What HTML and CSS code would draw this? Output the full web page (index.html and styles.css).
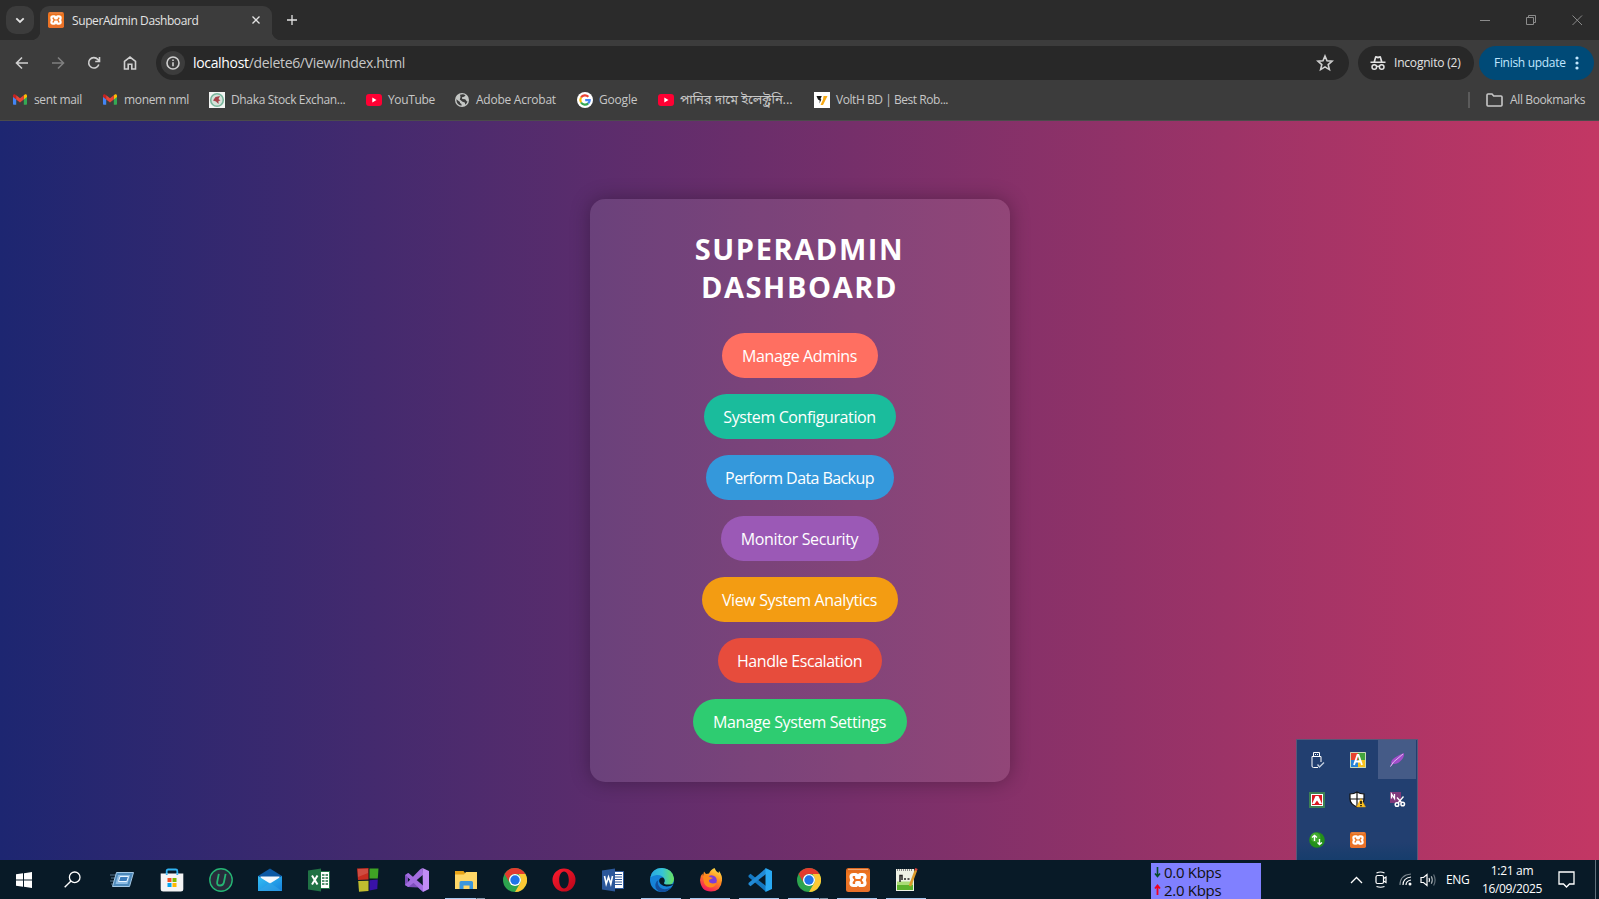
FILE: index.html
```html
<!DOCTYPE html>
<html lang="en">
<head>
<meta charset="utf-8">
<title>SuperAdmin Dashboard</title>
<link rel="stylesheet" href="styles.css">
</head>
<body>
<svg class="defs" width="0" height="0">
  <defs>
    <linearGradient id="gOrange" x1="0" y1="0" x2="0" y2="1"><stop offset="0" stop-color="#d9621a"/><stop offset=".25" stop-color="#f0771f"/><stop offset="1" stop-color="#e8702a"/></linearGradient>
    <linearGradient id="gEdge" x1="0" y1="0" x2="1" y2="0"><stop offset="0" stop-color="#2aa9e0"/><stop offset=".5" stop-color="#35c3d8"/><stop offset="1" stop-color="#6be35a"/></linearGradient>
    <linearGradient id="gFox" x1=".8" y1="0" x2=".3" y2="1"><stop offset="0" stop-color="#ffe34a"/><stop offset=".45" stop-color="#ff8a1f"/><stop offset="1" stop-color="#f5145f"/></linearGradient>
    <linearGradient id="gMail" x1="0" y1="0" x2="1" y2="1"><stop offset="0" stop-color="#35c0f5"/><stop offset="1" stop-color="#1682dc"/></linearGradient>
    <linearGradient id="gOpera" x1="0" y1="0" x2="1" y2="1"><stop offset="0" stop-color="#ff1b2d"/><stop offset="1" stop-color="#b8061a"/></linearGradient>
    <symbol id="gmail" viewBox="0 0 14 11"><path fill="#4285f4" d="M0 1.500V10q0 .7.7.7h2.500V4z"/><path fill="#34a853" d="M14 1.500V10q0 .7-.7.7h-2.500V4z"/><path fill="#fbbc04" d="M10.800 1.300 12.200.3Q14-.3 14 1.800V3l-3.200 2.600z"/><path fill="#c5221f" d="M3.200 1.300 1.800.3Q0-.3 0 1.800V3l3.200 2.600z"/><path fill="#ea4335" d="M3.200 1.300 7 4.300l3.800-3v4.300L7 8.500 3.200 5.600z"/></symbol>
    <symbol id="youtube" viewBox="0 0 16 12"><rect width="16" height="12" rx="3" fill="#ff0033"/><path fill="#fff" d="M6.300 3.500v5L10.500 6z"/></symbol>
    <symbol id="xampp" viewBox="0 0 24 24"><rect width="24" height="24" rx="2.500" fill="url(#gOrange)"/><path d="M2 1.500h20" stroke="#f4a46c" stroke-width="1.200"/><path fill="none" stroke="#fff" stroke-width="3.200" stroke-linejoin="round" d="M7.500 6.500h2q1.200 0 1.200 1.200v1.800h2.600V7.700q0-1.200 1.200-1.200h2q2.500 0 2.500 2.500 0 2-1.500 3 1.500 1 1.500 3 0 2.500-2.500 2.500h-2q-1.200 0-1.200-1.200v-1.800h-2.600v1.800q0 1.200-1.200 1.200h-2Q5 17.500 5 15q0-2 1.500-3Q5 11 5 9q0-2.500 2.500-2.500z"/></symbol>
    <symbol id="chrome" viewBox="0 0 24 24"><circle cx="12" cy="12" r="12" fill="#2da44e"/><path fill="#e33b2e" d="M1.600 6A12 12 0 0 1 22.400 6H12a6 6 0 0 0-5.200 9z"/><path fill="#fcc934" d="M22.400 6A12 12 0 0 1 12 24l5.200-9A6 6 0 0 0 17.200 9L15.500 6z"/><circle cx="12" cy="12" r="6" fill="#fff"/><circle cx="12" cy="12" r="4.700" fill="#1f74e8"/></symbol>
  </defs>
</svg>

<header class="chrome">
  <div class="tabstrip">
    <button class="tab-search"><svg width="28" height="28" viewBox="0 0 28 28"><path d="m10.300 12.300 3.700 3.700 3.700-3.700" class="ln2"/></svg></button>
    <div class="tab">
      <svg width="16" height="16"><use href="#xampp"/></svg>
      <span class="tab-title">SuperAdmin Dashboard</span>
      <svg class="tab-close" width="8" height="8" viewBox="0 0 8 8"><path d="m.5.5 7 7m0-7-7 7" class="ln1"/></svg>
    </div>
    <svg class="new-tab" width="12" height="12" viewBox="0 0 12 12"><path d="M6 1v10M1 6h10" class="ln1"/></svg>
    <svg class="win" width="104" height="14" viewBox="0 0 104 14"><path d="M0 7.500h10M46.500 4.500h7v7h-7zM48.500 4.500v-2h7v7h-2M92.500 2.500l9.500 9.500m0-9.500L92.500 12" fill="none" stroke="#8b8b8b"/></svg>
  </div>

  <div class="toolbar">
    <svg class="nav" viewBox="0 0 16 16"><path d="M14 8H2.800M8 2.500 2.500 8 8 13.500" class="ln15"/></svg>
    <svg class="nav off" viewBox="0 0 16 16"><path d="M2 8h11.200M8 2.500 13.500 8 8 13.500" class="ln15"/></svg>
    <svg class="nav" viewBox="0 0 16 16"><path d="M12.800 9.500A5.200 5.200 0 1 1 11.800 4.400L13.300 6M13.500 2v4.500H9.200" class="ln15"/></svg>
    <svg class="nav" viewBox="0 0 16 16"><path d="M2.500 14V6.300L8 2l5.500 4.300V14h-3.700V9.300H6.200V14z" class="ln15"/></svg>
    <div class="omnibox">
      <span class="info"><svg width="14" height="14" viewBox="0 0 14 14"><circle cx="7" cy="7" r="6" class="ln15"/><path d="M7 6.200v4M7 3.500v1.500" class="ln15"/></svg></span>
      <span class="url"><b>localhost</b>/delete6/View/index.html</span>
      <svg class="star" width="18" height="18" viewBox="0 0 18 18"><path d="m9 2 2 4.800 5.100.4-3.900 3.400 1.200 5L9 12.900l-4.400 2.700 1.200-5-3.900-3.400 5.100-.4z" class="ln15"/></svg>
    </div>
    <div class="incognito">
      <svg width="16" height="16" viewBox="0 0 16 16" fill="#e3e3e3"><path d="M3.500 6.500 5 1.500q.3-.7 1-.5l2 .5 2-.5q.7-.2 1 .5l1.500 5h3V8H.5V6.500zM5.300 6.500h5.400L9.800 3 8 3.400 6.200 3z"/><g fill="none" stroke="#e3e3e3" stroke-width="1.500"><circle cx="4.300" cy="12" r="2.300"/><circle cx="11.700" cy="12" r="2.300"/><path d="M6.500 11.700q1.500-.8 3 0"/></g></svg>
      <span>Incognito (2)</span>
    </div>
    <div class="update"><span>Finish update</span><svg width="4" height="14" viewBox="0 0 4 14" fill="#c2e7ff"><circle cx="2" cy="2" r="1.600"/><circle cx="2" cy="7" r="1.600"/><circle cx="2" cy="12" r="1.600"/></svg></div>
  </div>

  <nav class="bookmarks">
    <a class="bm b1"><svg width="14" height="11"><use href="#gmail"/></svg><span>sent mail</span></a>
    <a class="bm b2"><svg width="14" height="11"><use href="#gmail"/></svg><span>monem nml</span></a>
    <a class="bm b3"><svg width="16" height="16" viewBox="0 0 16 16"><path fill="#f3f5f3" d="M0 0h16v16H0z"/><circle cx="8" cy="8" r="6.300" fill="#d5e2da" stroke="#78b69c" stroke-width="1.600"/><path fill="#a6434a" d="M4 8.500 6.500 5 11 4 9.500 7l2 1.500-2 .5v3L7 9.500z"/></svg><span>Dhaka Stock Exchan...</span></a>
    <a class="bm b4"><svg width="16" height="12"><use href="#youtube"/></svg><span>YouTube</span></a>
    <a class="bm b5"><svg width="14" height="14" viewBox="0 0 14 14"><circle cx="7" cy="7" r="7" fill="#c4c7c5"/><path fill="#3c3c3c" d="M1.300 6.300 5 9v1l1.500 1v1.800Q1.500 12 1.300 6.300zM5 1.800q3.500-1.300 5.500.6L9 3.800 7 4.300 7.200 6l3 .2 1.500 2 .8.300q-.6 2-2.200 3.200L9.800 9.500 7.500 8.800 4.800 6.500 5.500 4z"/></svg><span>Adobe Acrobat</span></a>
    <a class="bm b6"><svg width="16" height="16" viewBox="0 0 16 16"><circle cx="8" cy="8" r="8" fill="#fff"/><g fill="none" stroke-width="2.200"><path stroke="#ea4335" d="M4 5.500A4.800 4.800 0 0 1 11.400 4.700"/><path stroke="#fbbc04" d="M4 5.500a5 5 0 0 0 0 5"/><path stroke="#34a853" d="M4 10.500a4.800 4.800 0 0 0 7.200.9"/><path stroke="#4285f4" d="M11.200 11.400Q12.700 10 12.700 8.200H8.200"/></g></svg><span>Google</span></a>
    <a class="bm b7"><svg width="16" height="12"><use href="#youtube"/></svg><span class="bn">পানির দামে ইলেক্ট্রনি...</span></a>
    <a class="bm b8"><svg width="16" height="16" viewBox="0 0 16 16"><path fill="#fff" d="M0 0h16v16H0z"/><path fill="#161616" d="M2.500 4h5.300L6.500 7l.8.500L5.500 11.500l.2-3L4 7.500z"/><path fill="#f6a813" d="M9.500 4h4L9 13H6.500L9 7.500z"/></svg><span>VoltH BD | Best Rob...</span></a>
    <span class="bm-sep"></span>
    <a class="bm all"><svg width="17" height="14" viewBox="0 0 17 14"><path d="M1 2q0-1 1-1h4l1.700 2H15q1 0 1 1v8q0 1-1 1H2q-1 0-1-1z" class="ln15"/></svg><span>All Bookmarks</span></a>
  </nav>
</header>

<main class="page">
  <section class="card">
    <h1><span class="t1">SuperAdmin</span><br><span class="t2">Dashboard</span></h1>
    <button class="btn coral">Manage Admins</button>
    <button class="btn teal">System Configuration</button>
    <button class="btn blue">Perform Data Backup</button>
    <button class="btn purple">Monitor Security</button>
    <button class="btn amber">View System Analytics</button>
    <button class="btn red">Handle Escalation</button>
    <button class="btn green">Manage System Settings</button>
  </section>
</main>

<aside class="tray-menu">
  <span><svg width="16" height="18" viewBox="0 0 16 18" fill="none" stroke="#fff"><path d="M4.500 5.500v-4h6v4M9 16.500H4.500q-1.500 0-1.500-1.500V5.500h9V11M6.500 3v1M8.500 3v1"/><path stroke="#c2cede" stroke-width="1.400" d="m8.500 13.500 2 2.500 4.500-4.500"/></svg></span>
  <span><svg width="16" height="16" viewBox="0 0 16 16"><path fill="#e8432d" d="M0 0h8v8H0z"/><path fill="#43a43c" d="M8 0h8v8H8z"/><path fill="#2583d8" d="M0 8h8v8H0z"/><path fill="#f8c21c" d="M8 8h8v8H8z"/><path fill="none" stroke="#c9d8ba" d="M.5.5h15v15H.5z"/><path fill="none" stroke="#fff" stroke-width="1.800" d="m4 13 3.500-10h1L12 13M5.300 9.500h5.500"/></svg></span>
  <span class="hot"><svg width="16" height="16" viewBox="0 0 16 16"><path fill="#a14dca" d="M1 15 2.500 12Q1 9 6 5.500 10 2.500 15 1q.5 5-4 8.500Q8 12.500 4 12z"/><path stroke="#e0b9f2" fill="none" d="M1.500 14.500 4.500 10 14 2"/></svg></span>
  <span><svg width="16" height="16" viewBox="0 0 16 16"><path fill="#3c8054" d="M0 0h16v16H0z"/><path fill="#fff" d="M2 2h12v12H2z"/><path fill="#dc1822" d="M3 3h10v10H3z"/><path fill="#fff" d="M6.500 4h3L13 12h-2.500L8 8.500 5.500 12H3z"/></svg></span>
  <span><svg width="17" height="17" viewBox="0 0 17 17"><path fill="#fff" stroke="#111" stroke-width="1.200" d="M1 3Q5 3 8 1q3 2 7 2v5q0 5-7 8Q1 13 1 8z"/><path stroke="#111" stroke-width="1.200" d="M8 1v15M1 8h14"/><path fill="#fdc321" stroke="#d99b10" stroke-width=".5" d="M12 7.500 16.500 16h-9z"/><path stroke="#111" stroke-width="1.600" d="M12 10v3M12 14v1.300"/></svg></span>
  <span><svg width="17" height="16" viewBox="0 0 17 16"><path fill="#80397b" d="M1 0h11v11H1z"/><path fill="none" stroke="#fff" stroke-width="1.300" d="M2.500 6.500V2l3 4.500V2M8 5.500l5 5.500M14.500 4.500 9 11"/><g fill="none" stroke="#fff" stroke-width="1.500"><circle cx="8" cy="12.500" r="1.800"/><circle cx="13.700" cy="12" r="1.800"/></g></svg></span>
  <span><svg width="16" height="16" viewBox="0 0 16 16"><circle cx="8" cy="8" r="7.800" fill="#23901a"/><circle cx="6.500" cy="5.500" r="5" fill="#56bd3d" opacity=".6"/><path stroke="#fff" stroke-width="1.400" fill="none" d="M5.500 9V4M3 5.500 5.500 3.500 8 5.500M10.500 7v5M8.500 10.500l2 2 2.500-2"/></svg></span>
  <span><svg width="16" height="16"><use href="#xampp"/></svg></span>
  <span></span>
</aside>

<footer class="taskbar">
  <span class="app start"><svg width="16" height="16" viewBox="0 0 16 16" fill="#fff"><path d="M0 2.300 7 1.300v6.200H0zM8 1.200 16 0v7.500H8zM0 8.500h7v6.200l-7-1zM8 8.500h8V16l-8-1.200z"/></svg></span>
  <span class="app find"><svg width="17" height="17" viewBox="0 0 17 17"><circle cx="10.700" cy="6.300" r="5.300" fill="none" stroke="#fff" stroke-width="1.300"/><path d="M7 10 .7 16.300" stroke="#fff" stroke-width="1.400"/></svg></span>
  <span class="app"><svg width="24" height="24" viewBox="0 0 24 24"><path d="M0 7h6M1 10h5M0 13h5M1 16h4" stroke="#58758d"/><path fill="#4e8abb" stroke="#a5c9e6" d="M6.500 4.500h17l-4 14h-17z"/><path fill="#8dbce4" d="M8 7h12l-2.500 9h-12z"/><path fill="#3b7cbb" stroke="#e8f4ff" d="M10 8.500h8.500l-1.700 5H8.500z"/></svg></span>
  <span class="app"><svg width="24" height="24" viewBox="0 0 24 24"><path fill="none" stroke="#30b3f2" stroke-width="1.800" d="M6.700 7V3q0-1.500 1.500-1.500h7.600q1.500 0 1.500 1.500v4"/><path fill="#f4f4f5" d="M.7 5.500h22.600V21q0 2.500-2.500 2.500H3.200Q.7 23.500.7 21z"/><path fill="#30b3f2" d="M5.800 5.500h1.800V7H5.800zM16.400 5.500h1.800V7h-1.800z"/><path fill="#f25022" d="M7.500 10h4v4h-4z"/><path fill="#7fba00" d="M12.500 10h4v4h-4z"/><path fill="#00a4ef" d="M7.500 15h4v4h-4z"/><path fill="#ffb900" d="M12.500 15h4v4h-4z"/></svg></span>
  <span class="app"><svg width="24" height="24" viewBox="0 0 24 24"><circle cx="12" cy="12" r="11.200" fill="#272c3b" stroke="#25b574" stroke-width="1.400"/><path fill="none" stroke="#25b574" stroke-width="1.800" d="M9.800 5.800 8.200 14q-.5 3.500 2.800 3.500T15 14l1.600-8.200"/></svg></span>
  <span class="app"><svg width="24" height="24" viewBox="0 0 24 24"><path fill="#0c59a4" d="M0 8 12 .5 24 8v5H0z"/><path fill="#f4f8fc" d="M2.500 8.500h19v5L12 18l-9.500-4.500z"/><path fill="url(#gMail)" d="m0 8 12 7.500L24 8v15H0z"/><path fill="#37a8e8" d="m0 23 12-8.500L24 23z" opacity=".5"/></svg></span>
  <span class="app"><svg width="24" height="24" viewBox="0 0 24 24"><path fill="#fff" stroke="#207245" d="M13 3.500h9.500v17H13z"/><path stroke="#207245" stroke-width="1.600" d="M15 7h6M15 10h6M15 13h6M15 16h6"/><path stroke="#fff" d="M18 4v16"/><path fill="#207245" d="M1 2.500 14 .5v23L1 21.500z"/><path stroke="#fff" stroke-width="2" d="m5 7.500 5.500 9m0-9-5.500 9"/></svg></span>
  <span class="app"><svg width="24" height="24" viewBox="0 0 24 24"><path fill="#c62d20" d="M1 .500 12.500 0v11.500L2 12z"/><path fill="#3fa324" d="M13.500.5h9l-.7 10h-8.300z"/><path fill="#c1bd2f" d="M2.200 13 12.500 12.700V23l-9.500.7z"/><path fill="#3912a7" d="M13.500 12.200l8.300-.8-.5 9.500-7.800 1.700z"/><path fill="#fff" opacity=".15" d="M2 1h10v4L2 9z"/></svg></span>
  <span class="app"><svg width="24" height="24" viewBox="0 0 24 24"><path fill="#7e4fbd" d="m0 7 3-2L18 24l-5-4.500L3 19 0 17z"/><path fill="#0a1c2a" d="m3 9.500 2.600 2.500L3 14.500z"/><path fill="#a26de0" d="M17.500 0 18 6.700 3.500 19 0 17 15 1.500zM3.500 5 18 17.500V24L.5 7z"/><path fill="#c18cf5" d="M17.500 0 24 3v18l-6 3z"/></svg></span>
  <span class="app open two"><svg width="24" height="24" viewBox="0 0 24 24"><path fill="#e8a317" d="M1 3h8.500l1.500 2v4H1z"/><path fill="#ffd767" d="M1 6.500h9l2-2.500h11v17H1z"/><path fill="#3b96dc" d="M5.500 21v-6.500Q5.500 13 7 13h10.500q1.500 0 1.500 1.500V21h-3.500v-3.500h-6V21z"/></svg></span>
  <span class="app"><svg width="24" height="24"><use href="#chrome"/></svg></span>
  <span class="app"><svg width="24" height="24" viewBox="0 0 24 24"><path fill="url(#gOpera)" fill-rule="evenodd" d="M12 .5a11.500 11.500 0 1 1 0 23 11.500 11.500 0 0 1 0-23zM12 3.500c-3 0-4.800 4-4.800 8.500s1.800 8.500 4.800 8.500 4.800-4 4.800-8.500-1.800-8.500-4.800-8.500z"/></svg></span>
  <span class="app"><svg width="24" height="24" viewBox="0 0 24 24"><path fill="#fff" stroke="#2b579a" d="M13 3.500h9.500v17H13z"/><path stroke="#2b579a" stroke-width="1.200" d="M14 6.500h7M14 9h7M14 11.500h7M14 14h7M14 16.500h7"/><path fill="#2b579a" d="M1 2.500 14 .5v23L1 21.500z"/><path fill="none" stroke="#fff" stroke-width="1.600" d="m3.500 8 1.700 8L7.500 9l2.300 7 1.700-8"/></svg></span>
  <span class="app open"><svg width="24" height="24" viewBox="0 0 24 24"><circle cx="12" cy="12" r="12" fill="#1683d8"/><path fill="url(#gEdge)" d="M.3 9.500Q2 0 12 0q11 1 12 10.500 0 6-6 6.500-4 0-4-2 1.500-2 .5-4Q12 6.500 6.500 7 2.500 7.500.3 9.500z"/><path fill="#124f9e" d="M8.500 12q-2 4 1.500 7.500 4 3.500 11 0Q17 24.500 11 24 4.500 22 5.500 16q.5-3 3-4z"/><path fill="#081a27" d="M14 15q1.300-2 .3-4-1.500-2.500-4.300-.5-2 2.500.5 5.500 4 4 11 1.500l2-1.500Q14 17.500 14 15z"/></svg></span>
  <span class="app open"><svg width="24" height="24" viewBox="0 0 24 24"><path fill="url(#gFox)" d="M5 3.500 7 6l3-.5q1.500-4 5.500-5.500 1 3 4 5l.5-2q3.500 4.500 3 9.500Q22 23.500 12 23.500T1 12q0-4 2.500-6.500L4 8z"/><circle cx="12.500" cy="12.500" r="5.300" fill="#7a3ed9"/><path fill="#ff8a1b" d="M4 8q4-2 7 1l3 1-4 2q-.5 3 3.500 3.500 3 0 4-1-1 5-6.500 5Q5 19 4.500 12z"/></svg></span>
  <span class="app open"><svg width="24" height="24" viewBox="0 0 24 24"><path fill="#1478c2" d="m.5 7.500 2-1.700L18 18v5.800L.5 9z"/><path fill="#218ad5" d="m.5 16.500 2 1.700L18 6V.2L.5 15z"/><path fill="#29a9f2" d="M17.500 0 24 3v18l-6.500 3z"/></svg></span>
  <span class="app open two"><svg width="24" height="24"><use href="#chrome"/></svg></span>
  <span class="app open"><svg width="24" height="24"><use href="#xampp"/></svg></span>
  <span class="app open npp"><svg width="24" height="24" viewBox="0 0 24 24"><path fill="#eef2e6" d="M2 1h18v22H2z"/><path fill="#5bb22c" d="M3 17h16v5H3z"/><path fill="#a9dc76" d="M3 13.500h16V17H3z"/><path stroke="#8a8a8a" stroke-dasharray="1 1" stroke-width="2" d="M3 2h16"/><path fill="none" stroke="#222" stroke-width="1.500" d="M6 14V7.500h2V12M10 11h2M13.500 11h2"/><path stroke="#dc9b2b" stroke-width="2.500" d="m22 2-6 16"/><path stroke="#d8453e" stroke-width="2.500" d="m22.500.5-.8 2"/></svg></span>

  <div class="netspeed">
    <div><svg width="7" height="12" viewBox="0 0 7 12"><path d="M3.500 1v9M1 7.500 3.500 10.500 6 7.500" stroke="#054a28" stroke-width="1.600" fill="none"/></svg><span>0.0 Kbps</span></div>
    <div><svg width="7" height="12" viewBox="0 0 7 12"><path d="M3.500 11V2M1 4.500 3.500 1.500 6 4.500" stroke="#f00020" stroke-width="1.800" fill="none"/></svg><span>2.0 Kbps</span></div>
  </div>
  <div class="tray">
    <svg class="up" width="13" height="8" viewBox="0 0 13 8"><path d="m1 7 5.500-5.500L12 7" fill="none" stroke="#fff" stroke-width="1.300"/></svg>
    <svg class="cam" width="12" height="17" viewBox="0 0 12 17" fill="none" stroke="#fff" stroke-width="1.200"><rect x="1" y="4.500" width="7.500" height="8" rx="1.500"/><path d="M8.500 7.500 11 6v5.500L8.500 10M1.500 2q4-2 8 0M1.500 15.500q4 1.500 8 0"/></svg>
    <svg class="wifi" width="13" height="13" viewBox="0 0 13 13" fill="none" stroke-width="1.200"><path stroke="#7b868e" d="M1 12Q1 2 12 1"/><path stroke="#fff" d="M4 12q0-7 8-8M7 12q0-4 5-5"/><circle cx="11" cy="11" r="1.500" fill="#fff"/></svg>
    <svg class="vol" width="17" height="14" viewBox="0 0 17 14" fill="none" stroke="#fff" stroke-width="1.200"><path d="M1 4.500h2.500L7 1.500v11L3.500 9.500H1zM9 5q1 2 0 4"/><path stroke="#a5adb2" d="M11.300 3.300q2 3.700 0 7.400"/><path stroke="#64717b" d="M13.600 1.500q3 5.500 0 11"/></svg>
    <span class="lang">ENG</span>
    <div class="clock"><span>1:21 am</span><span class="date">16/09/2025</span></div>
    <svg class="note" width="17" height="17" viewBox="0 0 17 17"><path d="M1 1h15v12h-4.500L8.500 16l-3-3H1z" fill="none" stroke="#fff" stroke-width="1.300"/></svg>
    <span class="peek"></span>
  </div>
</footer>
</body>
</html>
```
FILE: styles.css
```css
* { box-sizing: border-box; }
body {
  margin: 0; width: 1599px; height: 899px; overflow: hidden;
  display: flex; flex-direction: column;
  font-family: "Open Sans", "Noto Sans", "Noto Sans Bengali", sans-serif;
  font-size: 12px; letter-spacing: -.3px; color: #e3e3e3;
}
svg { display: block; flex: none; }
span { white-space: nowrap; }
button { border: 0; padding: 0; font: inherit; color: inherit; }
.defs { position: absolute; }
.ln1, .ln15, .ln2 { fill: none; stroke: currentColor; stroke-width: 1.3; }
.ln15 { stroke-width: 1.6; }
.ln2 { stroke-width: 1.8; }

/* Browser frame */
.chrome { height: 121px; flex: none; background: #3c3c3c; border-bottom: 1px solid #4b4b4b; }
.tabstrip { height: 40px; display: flex; background: #2b2b2b; padding: 6px 15px 0 6px; }
.tab-search { width: 28px; height: 28px; border-radius: 10px; background: #3c3c3c; }
.tab { position: relative; width: 232px; height: 34px; margin-left: 6px; padding: 0 12px 6px 8px; display: flex; align-items: center; gap: 8px; background: #3c3c3c; border-radius: 9px 9px 0 0; }
.tab::before, .tab::after { content: ""; position: absolute; bottom: 0; width: 9px; height: 9px; }
.tab::before { left: -9px; background: radial-gradient(circle at 0 0, transparent 9px, #3c3c3c 9.5px); }
.tab::after { right: -9px; background: radial-gradient(circle at 100% 0, transparent 9px, #3c3c3c 9.5px); }
.tab-title { flex: 1; letter-spacing: -.4px; }
.new-tab { margin: 8px 0 0 14px; }
.win { margin: 7px 0 0 auto; }

.toolbar { height: 40px; display: flex; align-items: center; padding: 6px 5px 0 14px; color: #d0d0d0; }
.nav { width: 16px; height: 16px; margin-right: 20px; }
.nav.off { opacity: .45; }
.omnibox { width: 1193px; height: 34px; margin-left: -2px; padding: 0 15px 0 5px; display: flex; align-items: center; border-radius: 17px; background: #282828; }
.info { width: 24px; height: 24px; border-radius: 50%; background: #3c3c3c; display: grid; place-items: center; }
.url { flex: 1; margin-left: 8px; padding-bottom: 1px; font-size: 14px; color: #c7c7c7; letter-spacing: -.33px; }
.url b { font-weight: 400; color: #fff; }
.incognito, .update { height: 34px; padding-bottom: 1px; border-radius: 17px; display: flex; align-items: center; }
.incognito { width: 116px; margin-left: 9px; padding-left: 12px; gap: 8px; background: #282828; color: #e3e3e3; letter-spacing: -.2px; }
.update { width: 115px; margin-left: 5px; padding: 0 15px 1px; justify-content: space-between; background: #004a77; color: #c2e7ff; }

.bookmarks { height: 40px; display: flex; align-items: center; padding: 0 0 1px 13px; color: #c7c7c7; letter-spacing: -.35px; }
.bm { display: flex; align-items: center; gap: 7px; }
.b1 { width: 90px; }
.b2 { width: 106px; }
.b3 { width: 157px; gap: 6px; }
.b4 { width: 89px; gap: 6px; }
.b5 { width: 122px; letter-spacing: -.25px; }
.b6 { width: 81px; gap: 6px; letter-spacing: -.2px; }
.b7 { width: 156px; gap: 6px; }
.b8 { gap: 6px; letter-spacing: -.45px; }
.bn { font-size: 13px; letter-spacing: -.1px; }
.bm-sep { width: 2px; height: 16px; margin-left: auto; background: #5b5b5b; }
.all { width: 113px; margin-left: 16px; letter-spacing: -.37px; }

/* Dashboard */
.page { height: 739px; flex: none; padding-top: 78px; display: flex; justify-content: center; align-items: flex-start; background: linear-gradient(to right, #1d2671, #c33764); letter-spacing: 0; }
.card { width: 420px; height: 583px; padding: 31px 0 0; display: flex; flex-direction: column; align-items: center; gap: 16px; border-radius: 15px; background: rgba(255, 255, 255, .1); box-shadow: 0 0 20px rgba(0, 0, 0, .3); color: #fff; }
h1 { margin: 0 0 11px; height: 76px; text-align: center; text-transform: uppercase; font-size: 29px; line-height: 38px; font-weight: 700; letter-spacing: 1.6px; }
.btn { height: 45px; flex: none; border-radius: 23px; color: #fff; font-size: 16px; letter-spacing: -.38px; }
.coral { width: 156px; background: #ff6f61; }
.teal { width: 192px; background: #1abc9c; }
.blue { width: 188px; background: #3498db; letter-spacing: -.58px; }
.purple { width: 158px; background: #9b59b6; }
.amber { width: 196px; background: #f39c12; }
.red { width: 164px; background: #e74c3c; letter-spacing: -.45px; }
.green { width: 214px; background: #2ecc71; }

/* Hidden icons flyout, floats over the page */
.tray-menu { position: absolute; left: 1296px; top: 739px; width: 122px; height: 121px; border: 1px solid #585878; border-bottom: 0; background: linear-gradient(#223f70 85%, #163d6c); display: grid; grid-template-columns: 40px 41px 38px; grid-template-rows: 39px 41px 39px; }
.tray-menu span { display: grid; place-items: center; }
.tray-menu .hot { background: #455b87; }

/* Taskbar */
.taskbar { height: 39px; flex: none; display: flex; background: #081a27; }
.app { width: 49px; height: 39px; display: grid; place-items: center; flex: none; position: relative; }
.start, .find { width: 48px; }
.find { margin-right: 1px; }
.find + .app { margin-right: 1px; }
.npp { padding-right: 2px; }
.open::after { content: ""; position: absolute; left: 4px; bottom: 0; width: 40px; height: 1px; background: #a5c8ee; }
.two::after { background: linear-gradient(to right, #a5c8ee 31px, #44545f 31px, #44545f 32px, #8095aa 32px); }
.netspeed { width: 110px; height: 36px; margin: 3px 0 0 220px; background: #8080ff; color: #111; font-size: 15px; letter-spacing: -.3px; line-height: 18px; }
.netspeed div { display: flex; align-items: center; gap: 3px; padding-left: 3px; height: 18px; }
.tray { flex: 1; display: flex; align-items: center; color: #fff; }
.up { margin-left: 89px; }
.cam { margin-left: 12px; }
.wifi { margin-left: 12px; }
.vol { margin-left: 8px; }
.lang { margin-left: 9px; width: 25px; }
.clock { width: 60px; margin-left: 11px; display: flex; flex-direction: column; align-items: center; line-height: 18px; }
.date { letter-spacing: -.35px; }
.note { margin-left: 16px; }
.peek { width: 1px; height: 39px; margin-left: auto; margin-right: 3px; background: #63717c; }
```
